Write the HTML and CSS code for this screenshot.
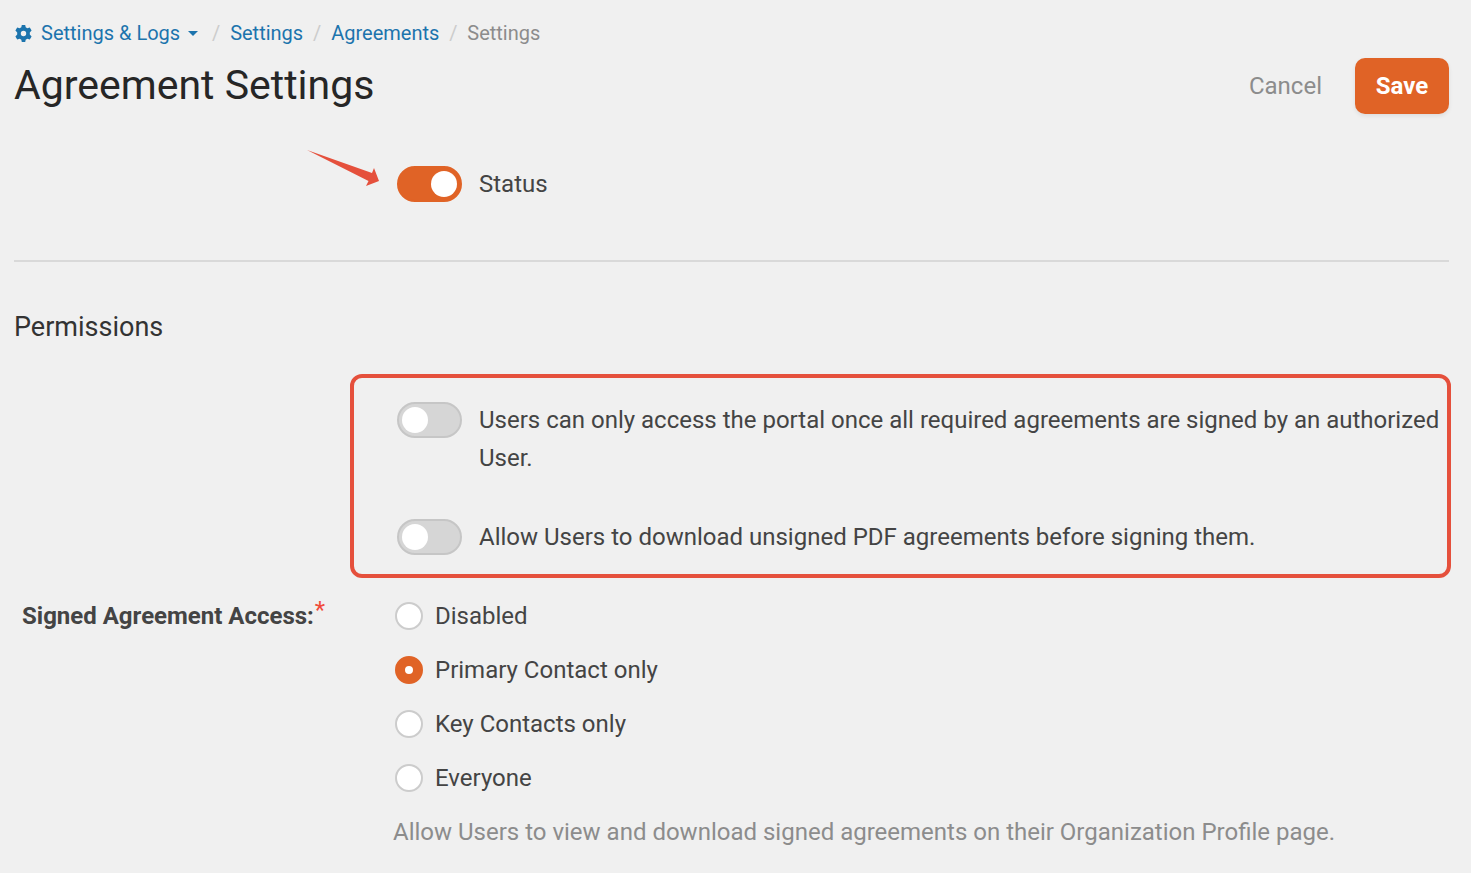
FILE: index.html
```
<!DOCTYPE html>
<html lang="en">

<head>
    <meta charset="UTF-8" />
    <meta name="viewport" content="width=device-width, initial-scale=1.0" />
    <title>Agreement Settings</title>
    <link rel="stylesheet" href="styles.css">
</head>

<body>
    <nav class="breadcrumb" aria-label="Breadcrumb">
        <a href="#" class="crumb-menu">
            <svg class="gear" viewBox="0 0 17 17" aria-hidden="true">
                <path fill-rule="evenodd" d="M6.800 0H10.200L10.700 2.300L12.300 3.200L14.800 2.500L16.600 5.500L14.800 7.400V9.600L16.600 11.500L14.800 14.500L12.300 13.800L10.700 14.700L10.200 17H6.800L6.300 14.700L4.700 13.800L2.200 14.500L.4 11.500L2.200 9.600V7.400L.4 5.500L2.200 2.500L4.700 3.200L6.300 2.300ZM8.500 5.800a2.700 2.700 0 1 0 0 5.400 2.700 2.700 0 0 0 0-5.400z" />
            </svg>
            <span>Settings &amp; Logs</span>
            <span class="caret"></span>
        </a>
        <span class="slash">/</span>
        <a href="#">Settings</a>
        <span class="slash">/</span>
        <a href="#">Agreements</a>
        <span class="slash">/</span>
        <span class="current">Settings</span>
    </nav>

    <form class="settings">
        <header class="page-header">
            <h1>Agreement Settings</h1>
            <div class="actions">
                <button type="button" class="btn-cancel">Cancel</button>
                <button type="submit" class="btn-save">Save</button>
            </div>
        </header>

        <div class="status-section">
            <div class="toggle-row">
                <svg class="arrow" viewBox="0 0 72 36" aria-hidden="true">
                    <path d="M0 0L65 23L67 18L72 31L59 36L61.500 31Z" />
                </svg>
                <input type="checkbox" class="toggle" id="status" checked />
                <label for="status">Status</label>
            </div>
        </div>

        <h2>Permissions</h2>
        <div class="highlight">
            <div class="toggle-row">
                <input type="checkbox" class="toggle" id="portal" />
                <label for="portal">Users can only access the portal once all required agreements are signed by an authorized User.</label>
            </div>
            <div class="toggle-row">
                <input type="checkbox" class="toggle" id="download" />
                <label for="download">Allow Users to download unsigned PDF agreements before signing them.</label>
            </div>
        </div>

        <div class="form-group" role="radiogroup" aria-labelledby="access-label">
            <div class="group-label" id="access-label">Signed Agreement Access:<span class="required">*</span></div>
            <div class="options">
                <div class="radio-row">
                    <input type="radio" name="access" id="access-disabled" />
                    <label for="access-disabled">Disabled</label>
                </div>
                <div class="radio-row">
                    <input type="radio" name="access" id="access-primary" checked />
                    <label for="access-primary">Primary Contact only</label>
                </div>
                <div class="radio-row">
                    <input type="radio" name="access" id="access-key" />
                    <label for="access-key">Key Contacts only</label>
                </div>
                <div class="radio-row">
                    <input type="radio" name="access" id="access-everyone" />
                    <label for="access-everyone">Everyone</label>
                </div>
                <p class="help">Allow Users to view and download signed agreements on their Organization Profile page.</p>
            </div>
        </div>
    </form>
</body>

</html>
```
FILE: styles.css
```
* {
    box-sizing: border-box;
    margin: 0;
    padding: 0;
}

body {
    font-family: Roboto, sans-serif;
    font-size: 24px;
    line-height: 38px;
    background: #f0f0f0;
    color: #444;
    padding: 20px 22px 20px 14px;
}

.breadcrumb {
    display: flex;
    align-items: center;
    font-size: 20px;
    line-height: 26px;
    color: #8c8c8c;
}

.breadcrumb a {
    color: #1c74ad;
    text-decoration: none;
}

.crumb-menu {
    display: flex;
    align-items: center;
}

.gear {
    width: 17px;
    height: 17px;
    margin: 0 9px 0 1px;
    fill: #1c74ad;
}

.caret {
    margin: 0 4px 0 8px;
    border: 5px solid transparent;
    border-top-color: #1c74ad;
    border-bottom: 0;
}

.slash {
    width: 28px;
    text-align: center;
    color: #ccc;
}

.page-header {
    display: flex;
    align-items: center;
    justify-content: space-between;
    margin-top: 12px;
}

h1 {
    padding-bottom: 2px;
    font-size: 41px;
    font-weight: 400;
    line-height: 52px;
    color: #262626;
}

.actions {
    display: flex;
    gap: 33px;
}

.actions button {
    border: none;
    background: none;
    font-family: inherit;
    font-size: 24px;
    cursor: pointer;
}

.actions .btn-cancel {
    color: #8c8c8c;
}

.actions .btn-save {
    width: 94px;
    height: 56px;
    border-radius: 10px;
    background: #e06326;
    color: #fff;
    font-weight: 700;
    box-shadow: 0 2px 4px rgba(0, 0, 0, 0.08);
}

.status-section {
    margin-top: 51px;
    padding: 0 0 57px 383px;
    border-bottom: 2px solid #d9d9d9;
}

.toggle-row {
    display: flex;
    align-items: flex-start;
    gap: 17px;
    position: relative;
}

.toggle {
    appearance: none;
    flex: none;
    display: flex;
    align-items: center;
    width: 65px;
    height: 36px;
    margin-top: 1px;
    padding: 0 3px;
    border: 2px solid #c6c6c6;
    border-radius: 18px;
    background: #d6d6d6;
}

.toggle::before {
    content: "";
    width: 26px;
    height: 26px;
    border-radius: 50%;
    background: #fff;
}

.toggle:checked {
    justify-content: flex-end;
    border-color: #e06326;
    background: #e06326;
}

.arrow {
    position: absolute;
    right: 100%;
    top: -15px;
    width: 72px;
    height: 36px;
    margin-right: 18px;
    fill: #e5503c;
}

h2 {
    margin-top: 47px;
    font-size: 27px;
    font-weight: 400;
    line-height: 36px;
    color: #333;
}

.highlight {
    display: flex;
    flex-direction: column;
    gap: 41px;
    margin: 29px -2px 0 336px;
    padding: 23px 4px 18px 43px;
    border: 4px solid #e5503c;
    border-radius: 12px;
}

.form-group {
    display: grid;
    grid-template-columns: 379px 1fr;
    margin-top: 19px;
}

.group-label {
    padding-left: 8px;
    font-weight: 700;
}

.required {
    margin-left: 1px;
    font-weight: 400;
    line-height: 1;
    vertical-align: 6px;
    color: #f04a3a;
}

.options {
    display: flex;
    flex-direction: column;
    gap: 16px;
}

.radio-row {
    display: flex;
    align-items: center;
    gap: 12px;
    padding-left: 2px;
}

.radio-row input {
    appearance: none;
    width: 28px;
    height: 28px;
    border: 2px solid #ccc;
    border-radius: 50%;
    background: #fff;
}

.radio-row input:checked {
    border: 10px solid #e06326;
}

.help {
    color: #8c8c8c;
}
```
